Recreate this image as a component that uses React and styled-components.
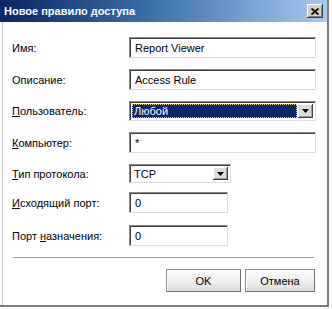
import React from "react";
import styled, { createGlobalStyle } from "styled-components";

const GlobalStyle = createGlobalStyle`
  html, body {
    margin: 0;
    padding: 0;
    background: #fff;
  }
  body {
    font-family: "Liberation Sans", Arial, sans-serif;
    font-size: 11px;
    color: #000;
  }
`;

const Window = styled.div`
  width: 327px;
  height: 305px;
  display: flex;
  flex-direction: column;
  background: #fff;
  border-right: 2px solid #7c7c7c;
  border-bottom: 2px solid #7c7c7c;
`;

const TitleBar = styled.div`
  height: 22px;
  display: flex;
  align-items: center;
  justify-content: space-between;
  padding: 0 4px 0 4px;
  background: linear-gradient(to right, #0a246a 0%, #3a6ea5 45%, #a6caf0 100%);
`;

const Title = styled.span`
  color: #fff;
  font-weight: bold;
  font-size: 11px;
`;

const CloseButton = styled.div`
  width: 16px;
  height: 14px;
  display: flex;
  align-items: center;
  justify-content: center;
  background: #d4d0c8;
  box-shadow: inset -1px -1px 0 #404040, inset 1px 1px 0 #fff,
    inset -2px -2px 0 #808080;
`;

const Body = styled.div`
  flex: 1;
  margin-left: 2px;
  border-left: 1px solid #c4c4c4;
  padding: 15px 12px 0 9px;
  display: flex;
  flex-direction: column;
`;

const Row = styled.div`
  display: grid;
  grid-template-columns: 117px auto;
  align-items: center;
  margin-top: ${(p) => p.$top || 0}px;
`;

const Label = styled.label`
  font-size: 11px;
  white-space: nowrap;

  u {
    text-decoration: underline;
  }
`;

const Field = styled.div`
  box-sizing: border-box;
  width: ${(p) => p.$w}px;
  height: ${(p) => p.$h || 21}px;
  display: flex;
  align-items: center;
  background: #fff;
  border-top: 1px solid #8a8a8a;
  border-left: 1px solid #8a8a8a;
  border-right: 1px solid #dcdcdc;
  border-bottom: 1px solid #dcdcdc;
  box-shadow: inset 1px 1px 0 #404040;
  padding: 2px 2px 2px 5px;
  font-size: 11px;
`;

const SelectValue = styled.div`
  flex: 1;
  height: 100%;
  display: flex;
  align-items: center;
  padding-left: 2px;
  margin-left: -3px;
  margin-right: 1px;
  color: ${(p) => (p.$selected ? "#fff" : "#000")};
  background: ${(p) => (p.$selected ? "#0a246a" : "transparent")};
  outline: ${(p) => (p.$selected ? "1px dotted #e8d070" : "none")};
  outline-offset: -1px;
`;

const DropButton = styled.div`
  width: 15px;
  height: 100%;
  display: flex;
  align-items: center;
  justify-content: center;
  background: #dedcd6;
  box-shadow: inset -1px -1px 0 #404040, inset 1px 1px 0 #fff,
    inset -2px -2px 0 #9a9a9a;
`;

const Separator = styled.div`
  margin: 11px 1px 0 1px;
  height: 1px;
  background: #a0a0a0;
  border-bottom: 1px solid #fff;
`;

const Buttons = styled.div`
  display: flex;
  justify-content: flex-end;
  gap: 4px;
  margin-top: 10px;
`;

const Button = styled.button`
  width: ${(p) => p.$w || 75}px;
  height: 23px;
  font-family: "Liberation Sans", Arial, sans-serif;
  font-size: 11px;
  color: #000;
  background: linear-gradient(to bottom, #fbfbfb 0%, #ececec 60%, #dadada 100%);
  border: 1px solid #8e8e8e;
  border-right-color: #6e6e6e;
  border-bottom-color: #6e6e6e;
  box-shadow: inset 1px 1px 0 #fff;
  padding: 0;
`;

const Arrow = () => (
  <svg width="7" height="4" viewBox="0 0 7 4">
    <path d="M0 0h7L3.5 4z" fill="#000" />
  </svg>
);

const CloseIcon = () => (
  <svg width="8" height="7" viewBox="0 0 8 7">
    <path d="M0.5 0.5L7.5 6.5M7.5 0.5L0.5 6.5" stroke="#000" strokeWidth="1.8" />
  </svg>
);

const App = () => {
  return (
    <>
      <GlobalStyle />
      <Window>
        <TitleBar>
          <Title>Новое правило доступа</Title>
          <CloseButton>
            <CloseIcon />
          </CloseButton>
        </TitleBar>
        <Body>
          <Row>
            <Label>Имя:</Label>
            <Field $w={187}>Report Viewer</Field>
          </Row>
          <Row $top={11}>
            <Label>Описание:</Label>
            <Field $w={187}>Access Rule</Field>
          </Row>
          <Row $top={11}>
            <Label>
              <u>П</u>ользователь:
            </Label>
            <Field $w={187} $h={20}>
              <SelectValue $selected>Любой</SelectValue>
              <DropButton>
                <Arrow />
              </DropButton>
            </Field>
          </Row>
          <Row $top={11}>
            <Label>
              <u>К</u>омпьютер:
            </Label>
            <Field $w={187}>*</Field>
          </Row>
          <Row $top={11}>
            <Label>
              <u>Т</u>ип протокола:
            </Label>
            <Field $w={102} $h={19}>
              <SelectValue>TCP</SelectValue>
              <DropButton>
                <Arrow />
              </DropButton>
            </Field>
          </Row>
          <Row $top={9}>
            <Label>
              <u>И</u>сходящий порт:
            </Label>
            <Field $w={99}>0</Field>
          </Row>
          <Row $top={12}>
            <Label>
              Порт <u>н</u>азначения:
            </Label>
            <Field $w={99}>0</Field>
          </Row>
          <Separator />
          <Buttons>
            <Button $w={75}>OK</Button>
            <Button $w={70}>Отмена</Button>
          </Buttons>
        </Body>
      </Window>
    </>
  );
};

export default App;
